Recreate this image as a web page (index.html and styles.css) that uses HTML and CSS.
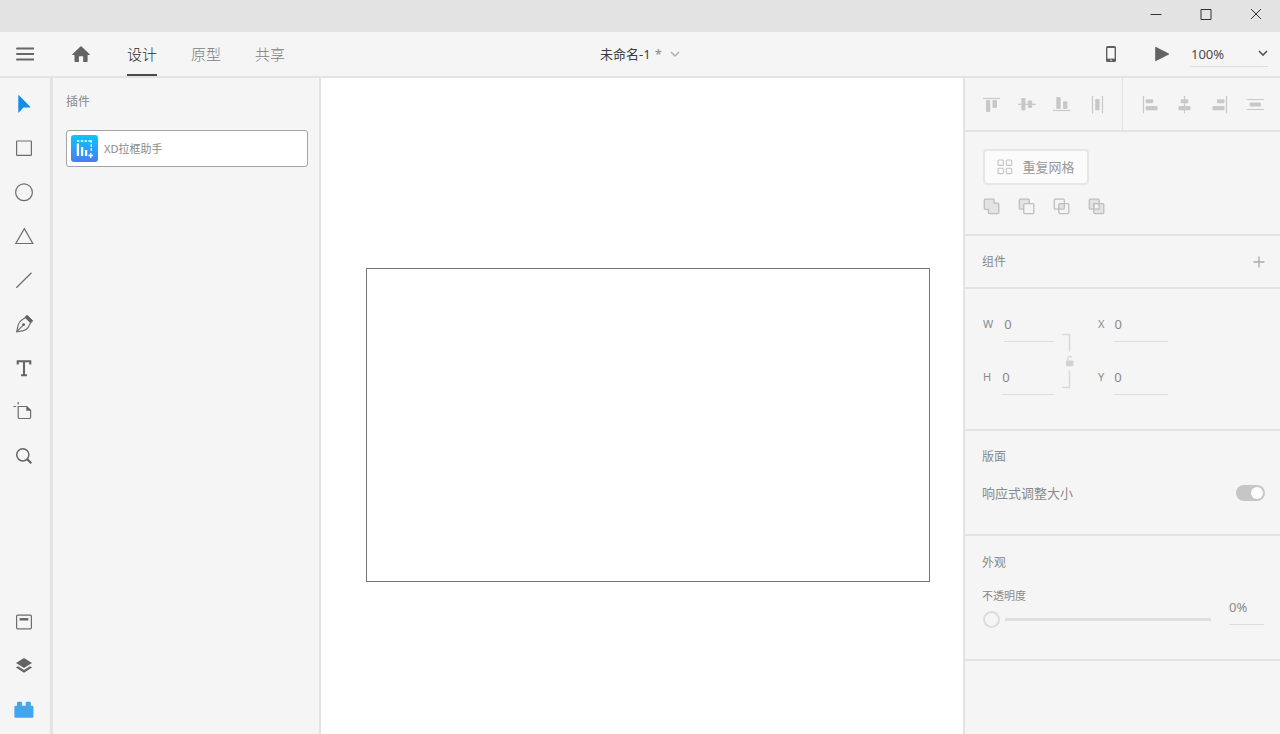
FILE: index.html
```html
<!DOCTYPE html>
<html lang="zh-CN">
<head>
<meta charset="utf-8">
<title>未命名-1</title>
<link rel="stylesheet" href="styles.css">
</head>
<body>
<div class="app">
  <div class="titlebar">
    <button class="win-btn" aria-label="最小化"><svg width="12" height="12"><path d="M0.5 6.5H11.5" stroke="#333" fill="none"/></svg></button>
    <button class="win-btn" aria-label="最大化"><svg width="12" height="12"><path d="M1 1.5H11V11.5H1Z" stroke="#333" fill="none"/></svg></button>
    <button class="win-btn" aria-label="关闭"><svg width="12" height="12"><path d="M1 1L11 11M11 1L1 11" stroke="#333" fill="none"/></svg></button>
  </div>

  <header class="header">
    <div class="header-left">
      <button class="menu-btn" aria-label="菜单"><svg width="18" height="16"><path d="M1 2.5H17.5M1 8H17.5M1 13.5H17.5" stroke="#666" stroke-width="2" stroke-linecap="round"/></svg></button>
      <button class="home-btn" aria-label="主页"><svg width="18" height="18"><path d="M9 1L17.7 9.2C18 9.6 17.8 10 17.3 10H15.6V16.3Q15.6 17 14.9 17H11.2V12Q11.2 11.3 10.5 11.3H7.6Q6.9 11.3 6.9 12V17H3.2Q2.5 17 2.5 16.3V10H.8C.2 10 0 9.6.4 9.2Z" fill="#636363"/></svg></button>
      <nav class="tabs">
        <a class="tab tab-active" href="#design">设计</a>
        <a class="tab" href="#prototype">原型</a>
        <a class="tab" href="#share">共享</a>
      </nav>
    </div>
    <button class="doc-title"><span>未命名-1</span><span class="dirty">*</span><svg width="10" height="6"><path d="M1 1L5 5L9 1" fill="none" stroke="#aaa" stroke-width="1.4"/></svg></button>
    <div class="header-right">
      <button class="device-btn" aria-label="设备预览"><svg width="12" height="18"><rect x="1" y="1" width="10" height="16" rx="1.6" fill="#5f5f5f"/><rect x="2.4" y="3" width="7.2" height="10.6" fill="#f8f8f8"/><path d="M5 15.3H7" stroke="#ddd" stroke-width="1"/></svg></button>
      <button class="play-btn" aria-label="桌面预览"><svg width="16" height="16"><path d="M1.2 1.4Q1.2.6 2 1L14.8 7.6Q15.3 8 14.8 8.4L2 15Q1.2 15.4 1.2 14.6Z" fill="#636363"/></svg></button>
      <div class="zoom-box">
        <select class="zoom-select" aria-label="缩放"><option>100%</option></select>
        <svg width="10" height="7"><path d="M1 1L5 5L9 1" fill="none" stroke="#555" stroke-width="1.6"/></svg>
      </div>
    </div>
  </header>

  <main class="workspace">
    <aside class="rail">
      <div class="tools">
        <button class="tool" aria-label="选择"><svg width="20" height="20"><path d="M4.3 1.4V18.2Q4.4 19 5 18.4L9.3 13.6H15.8Q16.7 13.4 16.2 12.7L5 1.2Q4.3.8 4.3 1.4Z" fill="#118eea"/></svg></button>
        <button class="tool" aria-label="矩形"><svg width="20" height="20"><rect x="2.6" y="3" width="14.8" height="14.4" rx=".6" class="line"/></svg></button>
        <button class="tool" aria-label="椭圆"><svg width="20" height="20"><circle cx="10" cy="10.3" r="8.4" class="line"/></svg></button>
        <button class="tool" aria-label="多边形"><svg width="20" height="20"><path d="M10.3 2.6L18.8 17.5H1.8Z" class="line"/></svg></button>
        <button class="tool" aria-label="直线"><svg width="20" height="20"><path d="M2.3 17.8L17.5 2.8" class="line"/></svg></button>
        <button class="tool" aria-label="钢笔"><svg width="20" height="20"><path d="M11.6 3.6L16.6 8.7L14.4 13Q12.8 16.1 8.6 16.8L2.7 17.8L4.2 10.9Q5.1 7.4 8.2 5.8Z" class="line"/><path d="M2.8 17.6L9.2 11.1" class="line"/><circle cx="9.6" cy="10.7" r="1.4" fill="#636363"/><path d="M13 1.2L18.7 6.8L16.8 8.8L11.2 3.2Z" fill="#636363" stroke="#636363" stroke-linejoin="round"/></svg></button>
        <button class="tool" aria-label="文本"><svg width="20" height="20"><path d="M3.7 6.4V3.3H16.3V6.4M10 3.3V17.3M7 17.3H13" fill="none" stroke="#636363" stroke-width="2"/></svg></button>
        <button class="tool" aria-label="画板"><svg width="22" height="20"><path d="M5.2 4.5H13.8L17.6 8.3V15.2Q17.6 16.5 16.3 16.5H6.5Q5.2 16.5 5.2 15.2Z" class="line"/><path d="M13.3 4.2V8.7H18Z" fill="#636363"/><path d="M5.2 0V2.6M.4 4.5H3.2" class="line"/></svg></button>
        <button class="tool" aria-label="缩放工具"><svg width="20" height="20"><circle cx="8.8" cy="8.8" r="6.1" fill="none" stroke="#666" stroke-width="1.5"/><path d="M13.2 13.2L17.3 17.3" stroke="#636363" stroke-width="2.2"/></svg></button>
      </div>
      <div class="tools">
        <button class="tool" aria-label="库"><svg width="20" height="20"><rect x="2.6" y="3.2" width="14.8" height="13.6" rx="1" class="line"/><path d="M5.6 7.3H14.3" stroke="#636363" stroke-width="2.4"/></svg></button>
        <button class="tool" aria-label="图层"><svg width="20" height="20"><path d="M10 1.9L18 7L10 12.1L2 7Z" fill="#636363"/><path d="M4 10.3L2 11.6L10 16.8L18 11.6L16 10.3L10 14.1Z" fill="#636363"/></svg></button>
        <button class="tool" aria-label="插件"><svg width="20" height="20"><path d="M.4 7Q.4 5.8 1.6 5.8H3V2.6Q3 1.8 3.8 1.8H7.3Q8.1 1.8 8.1 2.6V5.8H11.7V2.6Q11.7 1.8 12.5 1.8H16Q16.8 1.8 16.8 2.6V5.8H18.2Q19.4 5.8 19.4 7V16.7Q19.4 17.8 18.2 17.8H1.6Q.4 17.8.4 16.7Z" fill="#43a5ec"/></svg></button>
      </div>
    </aside>

    <aside class="plugins">
      <h2 class="heading">插件</h2>
      <button class="plugin">
        <svg width="27" height="27">
          <defs><linearGradient id="plugin-bg" x1="0" y1="0" x2="0" y2="1"><stop offset="0" stop-color="#06c8fd"/><stop offset="1" stop-color="#4a7cf0"/></linearGradient></defs>
          <rect width="27" height="27" rx="3" fill="url(#plugin-bg)"/>
          <path d="M6 6H21" stroke="#fff" stroke-width="1.4" stroke-dasharray="2.4 1.4"/>
          <path d="M20.3 5.3V16" stroke="#fff" stroke-width="1.4" stroke-dasharray="2.4 1.6"/>
          <path d="M6.9 8.4V21M11.1 12V21M15.1 15V21" stroke="#fff" stroke-width="2.3"/>
          <path d="M17.4 20.5H22.2M19.8 18.1V22.9" stroke="#fff" stroke-width="1.3"/>
        </svg>
        <span>XD拉框助手</span>
      </button>
    </aside>

    <section class="canvas"><div class="artboard"></div></section>

    <aside class="inspector">
      <section class="align">
        <div class="align-group">
          <button aria-label="顶对齐"><svg width="20" height="20"><path d="M2 4.5H19" class="rule"/><rect x="5" y="6" width="4.2" height="12" rx="1"/><rect x="11.5" y="6" width="4.5" height="8" rx="1"/></svg></button>
          <button aria-label="垂直居中"><svg width="20" height="20"><path d="M2 10.3H20" class="rule"/><rect x="5.3" y="4" width="4.2" height="12.4" rx="1"/><rect x="11.8" y="6.4" width="4.4" height="7.6" rx="1"/></svg></button>
          <button aria-label="底对齐"><svg width="20" height="20"><path d="M2 16.5H19.5" class="rule"/><rect x="5.3" y="3" width="4.4" height="12" rx="1"/><rect x="12" y="7.3" width="4.4" height="7.7" rx="1"/></svg></button>
          <button aria-label="水平分布"><svg width="20" height="20"><path d="M6.5 2V19.3M16.5 2V19.3" class="rule"/><rect x="9.2" y="5" width="4.4" height="11.2" rx="1"/></svg></button>
        </div>
        <div class="align-group">
          <button aria-label="左对齐"><svg width="20" height="20"><path d="M3.5 2V19.3" class="rule"/><rect x="5.6" y="5.2" width="7.6" height="4" rx="1"/><rect x="5.6" y="12" width="12" height="4.2" rx="1"/></svg></button>
          <button aria-label="水平居中"><svg width="20" height="20"><path d="M9.5 2V19.3" class="rule"/><rect x="5.7" y="5.2" width="7.6" height="4" rx="1"/><rect x="3.5" y="12" width="12" height="4.2" rx="1"/></svg></button>
          <button aria-label="右对齐"><svg width="20" height="20"><path d="M16.5 2V19.3" class="rule"/><rect x="7" y="5.2" width="7.4" height="4" rx="1"/><rect x="2.4" y="12" width="12.2" height="4.2" rx="1"/></svg></button>
          <button aria-label="垂直分布"><svg width="20" height="20"><path d="M1.7 5.5H19M1.7 15.5H19" class="rule"/><rect x="4.7" y="8.6" width="11.3" height="4" rx="1"/></svg></button>
        </div>
      </section>

      <section class="repeat">
        <button class="repeat-btn">
          <svg width="16" height="16" fill="none" stroke="#c4c4c4" stroke-width="1.1"><rect x="1" y="1" width="5.4" height="5.4" rx="1"/><rect x="9.4" y="1" width="5.4" height="5.4" rx="1"/><rect x="1" y="9.2" width="5.4" height="5.4" rx="1"/><rect x="9.4" y="9.2" width="5.4" height="5.4" rx="1"/></svg>
          <span>重复网格</span>
        </button>
        <div class="bools">
          <button aria-label="添加"><svg width="18" height="18"><path d="M1.3 2.2Q1.3 1.2 2.3 1.2H10.2Q11.2 1.2 11.2 2.2V5.2H14.8Q15.8 5.2 15.8 6.2V14.6Q15.8 15.6 14.8 15.6H6.4Q5.4 15.6 5.4 14.6V11.3H2.3Q1.3 11.3 1.3 10.3Z" class="shape shape-fill"/></svg></button>
          <button aria-label="减去"><svg width="18" height="18"><rect x="1.3" y="1.2" width="10" height="10" rx="1" class="shape shape-fill"/><rect x="5.8" y="5.6" width="10" height="10" rx="1" class="shape shape-clear"/></svg></button>
          <button aria-label="交叉"><svg width="18" height="18"><rect x="5.6" y="5.4" width="5.8" height="5.8" class="shape-fill"/><rect x="1.3" y="1.2" width="10" height="10" rx="1" class="shape"/><rect x="5.8" y="5.6" width="10" height="10" rx="1" class="shape"/></svg></button>
          <button aria-label="排除重叠"><svg width="18" height="18"><rect x="1.3" y="1.2" width="10" height="10" rx="1" class="shape shape-fill"/><rect x="5.8" y="5.6" width="10" height="10" rx="1" class="shape shape-fill"/><rect x="6" y="5.8" width="5.2" height="5.2" class="shape shape-clear"/></svg></button>
        </div>
      </section>

      <section class="component">
        <h2 class="heading">组件</h2>
        <button aria-label="添加组件"><svg width="12" height="12"><path d="M.5 6H11.5M6 .5V11.5" stroke="#a9a9a9" stroke-width="1.3"/></svg></button>
      </section>

      <section class="transform">
        <div class="fields size-fields">
          <div class="field"><label for="w">W</label><input id="w" value="0"></div>
          <div class="field"><label for="h">H</label><input id="h" value="0"></div>
        </div>
        <button class="lock" aria-label="锁定长宽比"><svg width="14" height="56"><path d="M1 1.5H8.5V18.5M8.5 37.5V54.5H1" fill="none" stroke="#dadada" stroke-width="1.6"/><rect x="5" y="27.5" width="7.4" height="5.8" rx=".8" fill="#d2d2d2"/><path d="M6.8 27.5V25.3Q7 23.3 8.8 23.3Q10.3 23.3 10.7 24.6" fill="none" stroke="#d2d2d2" stroke-width="1.3"/></svg></button>
        <div class="fields">
          <div class="field"><label for="x">X</label><input id="x" value="0"></div>
          <div class="field"><label for="y">Y</label><input id="y" value="0"></div>
        </div>
      </section>

      <section class="layout">
        <h2 class="heading">版面</h2>
        <div class="switch-row">
          <label for="responsive">响应式调整大小</label>
          <input id="responsive" class="switch" type="checkbox" checked>
        </div>
      </section>

      <section class="appearance">
        <h2 class="heading">外观</h2>
        <div class="opacity-row">
          <div class="opacity">
            <label for="opacity">不透明度</label>
            <input id="opacity" class="slider" type="range" min="0" max="100" value="0">
          </div>
          <input class="opacity-value" aria-label="不透明度值" value="0%">
        </div>
      </section>
    </aside>
  </main>
</div>
</body>
</html>
```
FILE: styles.css
```css
* { box-sizing: border-box; }

body {
  margin: 0;
  font-family: "Noto Sans", "Noto Sans CJK SC", sans-serif;
  font-size: 13px;
  line-height: 20px;
  color: #8a8a8a;
}

button, input, select {
  margin: 0;
  padding: 0;
  border: 0;
  background: none;
  color: inherit;
  font: inherit;
}

button { display: flex; align-items: center; justify-content: center; }
svg { display: block; flex: none; }

.app { display: flex; flex-direction: column; min-height: 100vh; background: #f5f5f5; }

.titlebar { display: flex; justify-content: flex-end; gap: 2px; height: 32px; background: #e3e3e3; }
.win-btn { width: 48px; height: 28px; }

.header {
  display: grid;
  grid-template-columns: 1fr auto 1fr;
  height: 46px;
  border-bottom: 2px solid #e3e3e3;
}
.header-left, .header-right { display: flex; align-items: center; }
.header-right { justify-content: flex-end; padding-right: 12px; }
.menu-btn { width: 50px; height: 44px; }
.home-btn { width: 62px; height: 44px; }
.tabs { display: flex; gap: 34px; margin-left: 15px; }
.tab {
  display: flex;
  align-items: center;
  height: 44px;
  padding-top: 2px;
  border-bottom: 2px solid transparent;
  font-size: 15px;
  font-weight: 300;
  color: #7c7c7c;
  text-decoration: none;
}
.tab-active { color: #2c2c2c; border-color: #4a4a4a; }
.doc-title { gap: 4px; color: #3d3d3d; }
.doc-title svg { margin-left: 4px; }
.dirty { color: #8a8a8a; }
.device-btn { width: 30px; height: 40px; }
.play-btn { width: 40px; height: 40px; margin: 0 8px 0 16px; }
.zoom-box {
  display: flex;
  align-items: center;
  width: 78px;
  height: 26px;
  border-bottom: 1px solid #dedede;
  color: #4a4a4a;
}
.zoom-select { flex: 1; appearance: none; padding-left: 1px; outline: 0; }

.workspace {
  flex: 1;
  display: grid;
  grid-template-columns: 53px 268px 1fr 317px;
}

.rail {
  display: flex;
  flex-direction: column;
  justify-content: space-between;
  padding: 4px 2px 2px 0;
  border-right: 3px solid #e3e3e3;
}
.tool { width: 48px; height: 44px; }
.line { fill: none; stroke: #6e6e6e; stroke-width: 1.2; }

.heading { margin: 0; font-size: 12px; font-weight: 400; line-height: 18px; }

.plugins { padding: 15px 11px 0; border-right: 2px solid #e3e3e3; }
.plugin {
  justify-content: flex-start;
  gap: 6px;
  height: 37px;
  width: 100%;
  margin-top: 19px;
  padding-left: 4px;
  border: 1px solid #a3a3a3;
  border-radius: 3px;
  background: #fff;
  font-size: 11px;
}
.plugins { padding-left: 13px; }

.canvas { display: flex; padding: 190px 33px 152px 45px; background: #fff; }
.artboard { flex: 1; border: 1px solid #757575; }

.inspector { border-left: 2px solid #e3e3e3; }
.inspector > section { border-bottom: 2px solid #e3e3e3; }

.align { display: flex; }
.align-group { display: flex; gap: 15px; padding: 16px; }
.align-group + .align-group { padding: 16px 0 16px 17px; border-left: 1px solid #e3e3e3; }
.align-group svg { fill: #c8c8c8; }
.rule { stroke: #c8c8c8; stroke-width: 1.2; }

.repeat { padding: 17px 18px 18px; }
.repeat-btn {
  gap: 9px;
  width: 106px;
  height: 36px;
  border: 2px solid #e6e6e6;
  border-radius: 4px;
  background: #fbfbfb;
  color: #9a9a9a;
}
.bools { display: flex; gap: 17px; margin-top: 13px; }
.shape { fill: none; stroke: #bebebe; stroke-width: 1.3; }
.shape-fill { fill: #e3e3e3; }
.shape-clear { fill: #f5f5f5; }

.component { display: flex; justify-content: space-between; align-items: center; padding: 17px 15px 16px 17px; }

.transform { display: flex; align-items: flex-start; padding: 24px 18px 34px; }
.fields { display: flex; flex-direction: column; gap: 24px; width: 70px; }
.size-fields { width: 71px; }
.field { display: flex; gap: 10px; height: 29px; }
.size-fields .field { gap: 11px; }
.field label { font-size: 11px; line-height: 22px; }
.field input { flex: 1; min-width: 0; padding-bottom: 7px; border-bottom: 1px solid #dedede; }
.lock { margin: 20px 23px 0 7px; }

.layout { padding: 17px 15px 31px 17px; }
.switch-row { display: flex; justify-content: space-between; align-items: center; margin-top: 17px; }
.switch {
  display: flex;
  justify-content: flex-end;
  width: 29px;
  height: 16px;
  padding: 2px;
  border-radius: 8px;
  background: #c6c6c6;
  appearance: none;
}
.switch::before { content: ""; width: 12px; border-radius: 6px; background: #fdfdfd; }
.switch:not(:checked) { justify-content: flex-start; }

.appearance { padding: 18px 16px 28px 17px; }
.opacity-row { display: flex; justify-content: space-between; gap: 18px; margin-top: 15px; }
.opacity { flex: 1; display: flex; flex-direction: column; }
.opacity label { font-size: 11px; line-height: 18px; }
.slider { width: 100%; height: 24px; margin-top: 2px; padding-left: 1px; appearance: none; }
.slider::-webkit-slider-runnable-track {
  height: 17px;
  background: linear-gradient(#dedede, #dedede) right center / calc(100% - 22px) 3px no-repeat;
}
.slider::-webkit-slider-thumb {
  width: 17px;
  height: 17px;
  border: 2px solid #dcdcdc;
  border-radius: 50%;
  background: #f5f5f5;
  appearance: none;
}
.opacity-value { width: 35px; height: 28px; margin-top: 10px; padding-bottom: 7px; border-bottom: 1px solid #dedede; }
```
